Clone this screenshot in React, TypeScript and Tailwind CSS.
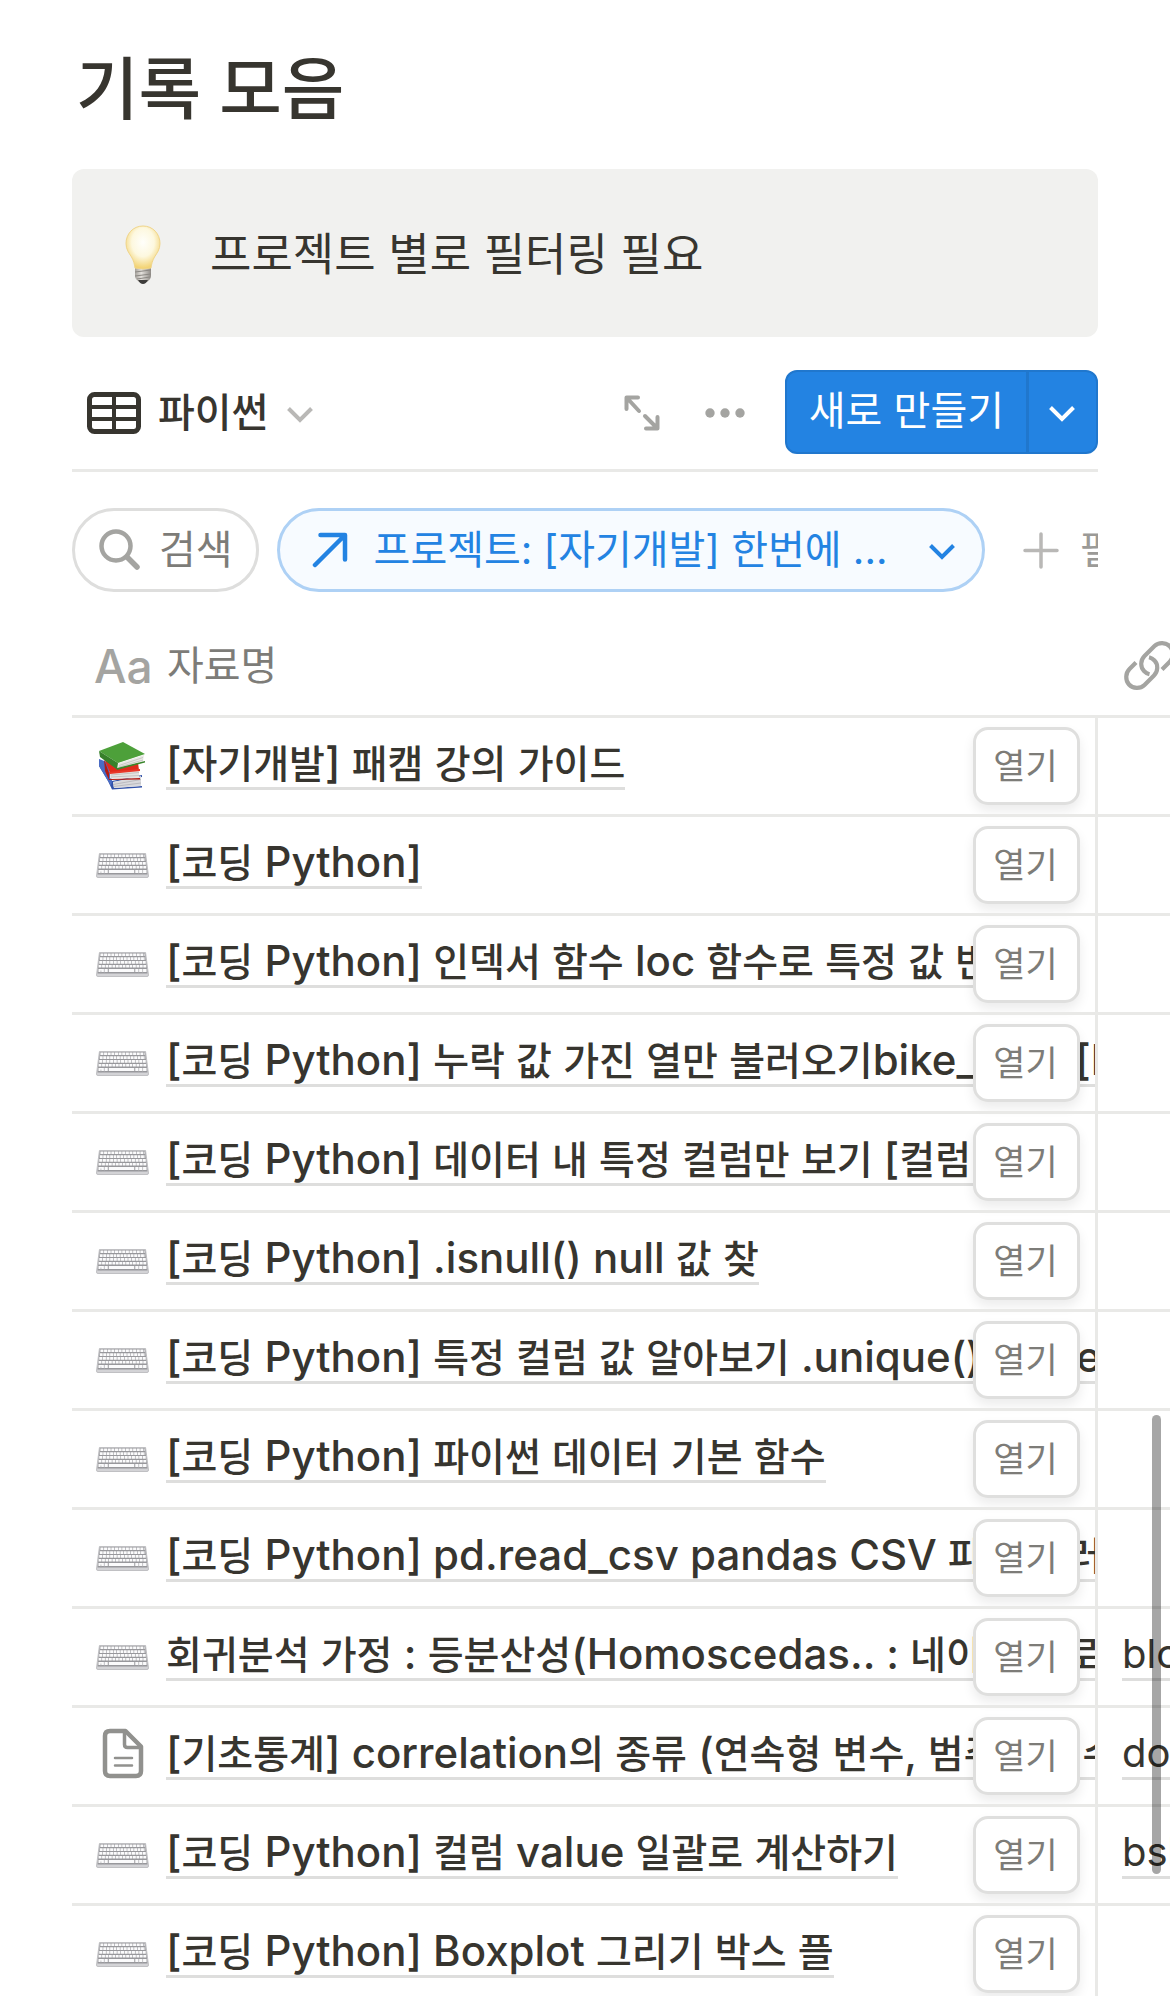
import React from 'react';

type IconKind = 'books' | 'keyboard' | 'page';

interface Entry {
  id: number;
  icon: IconKind;
  title: string;
  link?: string;
}

const entries: Entry[] = [
  { id: 1, icon: 'books', title: '[자기개발] 패캠 강의 가이드' },
  { id: 2, icon: 'keyboard', title: '[코딩 Python]' },
  { id: 3, icon: 'keyboard', title: '[코딩 Python] 인덱서 함수 loc 함수로 특정 값 반환' },
  { id: 4, icon: 'keyboard', title: '[코딩 Python] 누락 값 가진 열만 불러오기bike_data [bike_data' },
  { id: 5, icon: 'keyboard', title: '[코딩 Python] 데이터 내 특정 컬럼만 보기 [컬럼명]' },
  { id: 6, icon: 'keyboard', title: '[코딩 Python] .isnull() null 값 찾' },
  { id: 7, icon: 'keyboard', title: '[코딩 Python] 특정 컬럼 값 알아보기 .unique() value' },
  { id: 8, icon: 'keyboard', title: '[코딩 Python] 파이썬 데이터 기본 함수' },
  { id: 9, icon: 'keyboard', title: '[코딩 Python] pd.read_csv pandas CSV 파일 불러오기' },
  { id: 10, icon: 'keyboard', title: '회귀분석 가정 : 등분산성(Homoscedas.. : 네이버 블로그', link: 'blog.naver.com' },
  { id: 11, icon: 'page', title: '[기초통계] correlation의 종류 (연속형 변수, 범주형 변수)', link: 'docs.google.com' },
  { id: 12, icon: 'keyboard', title: '[코딩 Python] 컬럼 value 일괄로 계산하기', link: 'bskyvision.com' },
  { id: 13, icon: 'keyboard', title: '[코딩 Python] Boxplot 그리기 박스 플' },
];

export default function App() {
  return (
    <main className="relative h-screen overflow-hidden bg-white font-['Inter','Noto_Sans_CJK_KR',sans-serif] text-[40px] leading-[48px] text-[#37352f]">
      <div className="px-[72px] pt-12">
        <h1 className="pl-1 text-[68px] font-medium leading-[82px]">기록 모음</h1>

        {/* Callout */}
        <div className="mt-[39px] flex h-[168px] items-center rounded-xl bg-[#f1f1ef] pl-[52px] pt-1">
          <BulbIcon />
          <p className="ml-12 text-[45px] leading-[60px]">프로젝트 별로 필터링 필요</p>
        </div>

        {/* View toolbar */}
        <div className="mt-[33px] flex items-center border-b-[3px] border-[#e9e9e7] pb-[15px]">
          <button className="flex items-center pl-[15px] pt-[2px] font-medium">
            <TableIcon />
            <span className="ml-[17px]">파이썬</span>
            <ChevronIcon className="ml-[19px] text-[#b9b8b6]" />
          </button>
          <div className="ml-auto flex items-center pt-[2px] text-[#a4a4a1]">
            <button aria-label="전체 페이지로 열기">
              <ExpandIcon />
            </button>
            <button aria-label="더 보기" className="ml-[45px]">
              <DotsIcon />
            </button>
          </div>
          <div className="ml-10 flex h-[84px] overflow-hidden rounded-xl border-2 border-[#2077cd] bg-[#2383e2] text-white">
            <button className="pb-[2px] pl-[22px] pr-[22px]">새로 만들기</button>
            <button aria-label="템플릿 선택" className="border-l-[3px] border-[#2077cd] pl-[20px] pr-[21px]">
              <ChevronIcon />
            </button>
          </div>
        </div>

        {/* Filters */}
        <div className="mt-9 flex items-center overflow-hidden whitespace-nowrap">
          <button className="flex h-[84px] shrink-0 items-center rounded-full border-[3px] border-[#dededd] pl-6 pr-[23px] text-[#7d7c78]">
            <SearchIcon />
            <span className="ml-[18px]">검색</span>
          </button>
          <button className="ml-[18px] flex h-[84px] shrink-0 items-center rounded-full border-[3px] border-[#aed1f5] bg-[#f7fbff] pl-8 pr-[27px] text-[#2383e2]">
            <ArrowIcon />
            <span className="ml-[26px]">프로젝트: [자기개발] 한번에 ...</span>
            <ChevronIcon className="ml-[42px]" />
          </button>
          <button className="ml-[38px] flex shrink-0 items-center text-[#9b9a97]">
            <PlusIcon />
            <span className="ml-[20px]">필터 추가</span>
          </button>
        </div>
      </div>

      <div className="mt-6 pl-[72px]">
        <table className="w-full table-fixed border-separate border-spacing-0">
          <colgroup>
            <col />
            <col className="w-[72px]" />
          </colgroup>
          <thead>
            <tr className="text-[#7d7c78]">
              <th scope="col" className="h-[99px] p-0 text-left font-normal">
                <div className="flex items-center pl-[22px]">
                  <span aria-hidden="true" className="w-[56px] text-[46px] font-medium text-[#a4a4a1]">
                    Aa
                  </span>
                  <span className="ml-[17px]">자료명</span>
                </div>
              </th>
              <th scope="col" aria-label="URL" className="p-0">
                <div className="overflow-hidden pl-[25px] text-[#a4a4a1]">
                  <LinkIcon />
                </div>
              </th>
            </tr>
          </thead>
          <tbody>
            {entries.map(entry => (
              <EntryRow key={entry.id} entry={entry} />
            ))}
          </tbody>
        </table>
      </div>

      {/* Floating scroll thumb */}
      <div className="absolute right-[9px] top-[1415px] h-[459px] w-[9px] rounded-full bg-black/35" />
    </main>
  );
}

function EntryRow({ entry }: { entry: Entry }) {
  return (
    <tr className="whitespace-nowrap">
      <td className="relative border-r-[3px] border-t-[3px] border-[#e9e9e7] p-0">
        <div className="flex h-24 items-center overflow-hidden pl-6">
          <span className="flex w-[53px] shrink-0 justify-center">
            <EntryIcon kind={entry.icon} />
          </span>
          <a href="#" className="mb-[3px] ml-[17px] h-[51px] border-b-[3px] border-[#dededd] font-medium">
            <EntryTitle title={entry.title} />
          </a>
        </div>
        <button className="absolute right-[15px] top-[9px] h-[78px] w-[107px] rounded-[15px] border-[3px] border-[#dfdfde] bg-white pr-[2px] text-[35px] text-[#7d7c78] shadow-[0_6px_12px_rgba(15,15,15,0.08)]">
          열기
        </button>
      </td>
      <td className="border-t-[3px] border-[#e9e9e7] p-0">
        {entry.link && (
          <div className="mb-[3px] flex overflow-hidden pl-6">
            <a href="#" className="border-b-[3px] border-[#dededd]">
              {entry.link}
            </a>
          </div>
        )}
      </td>
    </tr>
  );
}

// Latin runs are set a little larger so they balance with the Hangul
function EntryTitle({ title }: { title: string }) {
  const parts = title.split(/([가-힣]+)/);
  return (
    <span className="text-[42px]">
      {parts.map((part, i) =>
        i % 2 ? (
          <span key={i} className="text-[39px]">
            {part}
          </span>
        ) : (
          part
        )
      )}
    </span>
  );
}

function EntryIcon({ kind }: { kind: IconKind }) {
  if (kind === 'books') return <BooksIcon />;
  if (kind === 'page') return <PageIcon />;
  return <KeyboardIcon />;
}

function BulbIcon() {
  return (
    <svg width="38" height="60" viewBox="0 0 38 60" aria-hidden="true">
      <defs>
        <radialGradient id="glass" cx="50%" cy="38%" r="60%">
          <stop offset="0" stopColor="#fffffb" />
          <stop offset="0.55" stopColor="#fdf8df" />
          <stop offset="1" stopColor="#f3d373" />
        </radialGradient>
        <linearGradient id="cap" x1="0" x2="1" y1="0" y2="0">
          <stop offset="0" stopColor="#a5a19b" />
          <stop offset="0.4" stopColor="#e4e1dc" />
          <stop offset="1" stopColor="#8f8b86" />
        </linearGradient>
      </defs>
      <path d="M11 42h16v9q0 3-4 6h-8q-4-3-4-6z" fill="url(#cap)" />
      <path d="M11 47l16-2M11 51l16-2M13 54l13-2" stroke="#8c8984" strokeWidth="1" />
      <path d="M14 55h10q-2 4-5 4t-5-4z" fill="#3d3c3a" />
      <path
        d="M19 1C9 1 2 9 2 18.500c0 6 3 9.500 5.500 13.500 2 3.500 3 7 3.500 11q8 2 16 0c.5-4 1.500-7.500 3.500-11 2.500-4 5.500-7.500 5.500-13.500C36 9 29 1 19 1z"
        fill="url(#glass)"
        stroke="#f0d58a"
        strokeWidth="1"
      />
    </svg>
  );
}

function TableIcon() {
  return (
    <svg width="54" height="42" viewBox="0 0 54 42" fill="none" stroke="currentColor" aria-hidden="true">
      <rect x="2.500" y="2.500" width="49" height="37" rx="5" strokeWidth="5" />
      <path d="M3 15h48M3 27h48M27 3v36" strokeWidth="4" />
    </svg>
  );
}

function ChevronIcon({ className = '' }: { className?: string }) {
  return (
    <svg
      width="26"
      height="20"
      viewBox="0 0 26 20"
      fill="none"
      stroke="currentColor"
      strokeWidth="4"
      className={className}
      aria-hidden="true"
    >
      <path d="M1.500 5.500L13 17L24.500 5.500" />
    </svg>
  );
}

function ExpandIcon() {
  return (
    <svg
      width="36"
      height="36"
      viewBox="0 0 36 36"
      fill="none"
      stroke="currentColor"
      strokeWidth="4"
      strokeLinecap="round"
      strokeLinejoin="round"
      aria-hidden="true"
    >
      <path d="M14 2.500H2.500V14M3.500 3.500L15 16M22 33.500h11.500V22M32.500 32.500L21 21" />
    </svg>
  );
}

function DotsIcon() {
  return (
    <svg width="40" height="10" viewBox="0 0 40 10" fill="currentColor" aria-hidden="true">
      <circle cx="5" cy="5" r="4.700" />
      <circle cx="20" cy="5" r="4.700" />
      <circle cx="35" cy="5" r="4.700" />
    </svg>
  );
}

function SearchIcon() {
  return (
    <svg
      width="42"
      height="42"
      viewBox="0 0 42 42"
      fill="none"
      stroke="#a4a4a1"
      strokeLinecap="round"
      aria-hidden="true"
    >
      <circle cx="17" cy="17" r="14.500" strokeWidth="4.500" />
      <path d="M28.500 28.500L38 38" strokeWidth="5.500" />
    </svg>
  );
}

function ArrowIcon() {
  return (
    <svg
      width="36"
      height="36"
      viewBox="0 0 36 36"
      fill="none"
      stroke="currentColor"
      strokeWidth="4.500"
      strokeLinecap="round"
      strokeLinejoin="round"
      aria-hidden="true"
    >
      <path d="M8.500 3h24.500v24.500M32 4L3 33" />
    </svg>
  );
}

function PlusIcon() {
  return (
    <svg
      width="36"
      height="37"
      viewBox="0 0 36 37"
      stroke="#b9b8b6"
      strokeWidth="3.500"
      strokeLinecap="round"
      aria-hidden="true"
    >
      <path d="M18 2v33M2 18.500h32" />
    </svg>
  );
}

function LinkIcon() {
  return (
    <svg
      width="54"
      height="52"
      viewBox="0 0 54 52"
      fill="none"
      stroke="currentColor"
      strokeWidth="4.200"
      className="max-w-none"
      aria-hidden="true"
    >
      <path d="M13 22.500L6.500 29C2.500 33 2 40 6 44.500s11.500 4.500 15.500.5l9.500-9.500c4-4 4.500-11 .5-15-1.600-1.700-3.300-2.700-5.500-3.200" />
      <path d="M39 29.500L46.500 22c4-4 4.500-11 .5-15.500s-11.500-4.500-15.500-.5L21.500 16c-4 4-4.500 11-.5 15 1.600 1.700 3.300 2.700 5.500 3.200" />
    </svg>
  );
}

function PageIcon() {
  return (
    <svg
      width="42"
      height="56"
      viewBox="0 0 42 56"
      fill="none"
      stroke="#91918e"
      strokeLinejoin="round"
      strokeLinecap="round"
      aria-hidden="true"
    >
      <path
        d="M8 3h15.500L39 18.500V43q0 5-5 5H8q-5 0-5-5V8q0-5 5-5z"
        strokeWidth="4.500"
      />
      <path d="M22.500 4v12.500q0 3 3 3H38" strokeWidth="3.500" />
      <path d="M13 30h17M13 37.500h17" strokeWidth="2.500" />
    </svg>
  );
}

function BooksIcon() {
  return (
    <svg width="48" height="48" viewBox="0 0 48 48" aria-hidden="true">
      {/* blue */}
      <path d="M0 17L13 39L43 33V35L14 40L15 46L43 44V45.500L13 47.500L9 39L0 24z" fill="#3151a8" />
      <path d="M0 17L8 20L13 39L12 44L0 24z" fill="#4a6cc4" />
      <path d="M14 40L42 34V44L15 46z" fill="#d9d9dc" />
      <path d="M14 42.500L42 37.500M14.500 44.500L42 41" stroke="#b3b3b8" strokeWidth="0.800" />
      {/* red */}
      <path d="M5 16L18 27L39 21L40 28L11 31z" fill="#e02a1c" />
      <path d="M5 17L10 31L10 37L41 36V37.500L10 38L6 29z" fill="#b31912" />
      <path d="M11 31L40 28V36L11 36.500z" fill="#e6e4e3" />
      <path d="M12 33L40 30.500M12 35L40 33.500" stroke="#bdbab8" strokeWidth="0.800" />
      <path d="M10 30L41 27V29L11 32z" fill="#e8382a" />
      {/* green */}
      <path d="M0 9L24 0L46 12L19 21z" fill="#4da03a" />
      <path d="M0 9L19 21L18 27.500L1 15z" fill="#37802a" />
      <path d="M19 21.500L45 13L44 19.500L19 26z" fill="#e9e9e6" />
      <path d="M20 23.500L44 15.500M20 25L44 18" stroke="#bfbfba" strokeWidth="0.800" />
      <path d="M18 26L46 19V20.500L18 28z" fill="#3a862c" />
    </svg>
  );
}

function KeyboardIcon() {
  const rows = [2.8, 6.6, 10.4, 14.2];
  return (
    <svg width="53" height="25" viewBox="0 0 54 25" preserveAspectRatio="none" aria-hidden="true">
      <path d="M3.500 0.500H50.500L53.500 23q0 1.500-1.500 1.500H2Q.5 24.500.5 23z" fill="#d3d3d6" stroke="#b4b4b8" strokeWidth="0.800" />
      <path d="M4 1H50L52.500 21.500H1.500z" fill="#98989c" />
      {rows.map((y, i) => (
        <path
          key={y}
          d={`M${4.5 - i * 0.6} ${y}H${49.5 + i * 0.6}`}
          stroke="#fbfbfc"
          strokeWidth="2.600"
          strokeDasharray={i % 2 ? '2.9 0.6' : '3.1 0.6'}
        />
      ))}
      <path d="M2.500 18.500h9.500M13 18.500h26M40 18.500h11.500" stroke="#fbfbfc" strokeWidth="3.200" />
      <path d="M5 18.500v3M8.500 17v4M43.500 17v4M47.500 17v4" stroke="#a8a8ac" strokeWidth="0.700" />
    </svg>
  );
}
